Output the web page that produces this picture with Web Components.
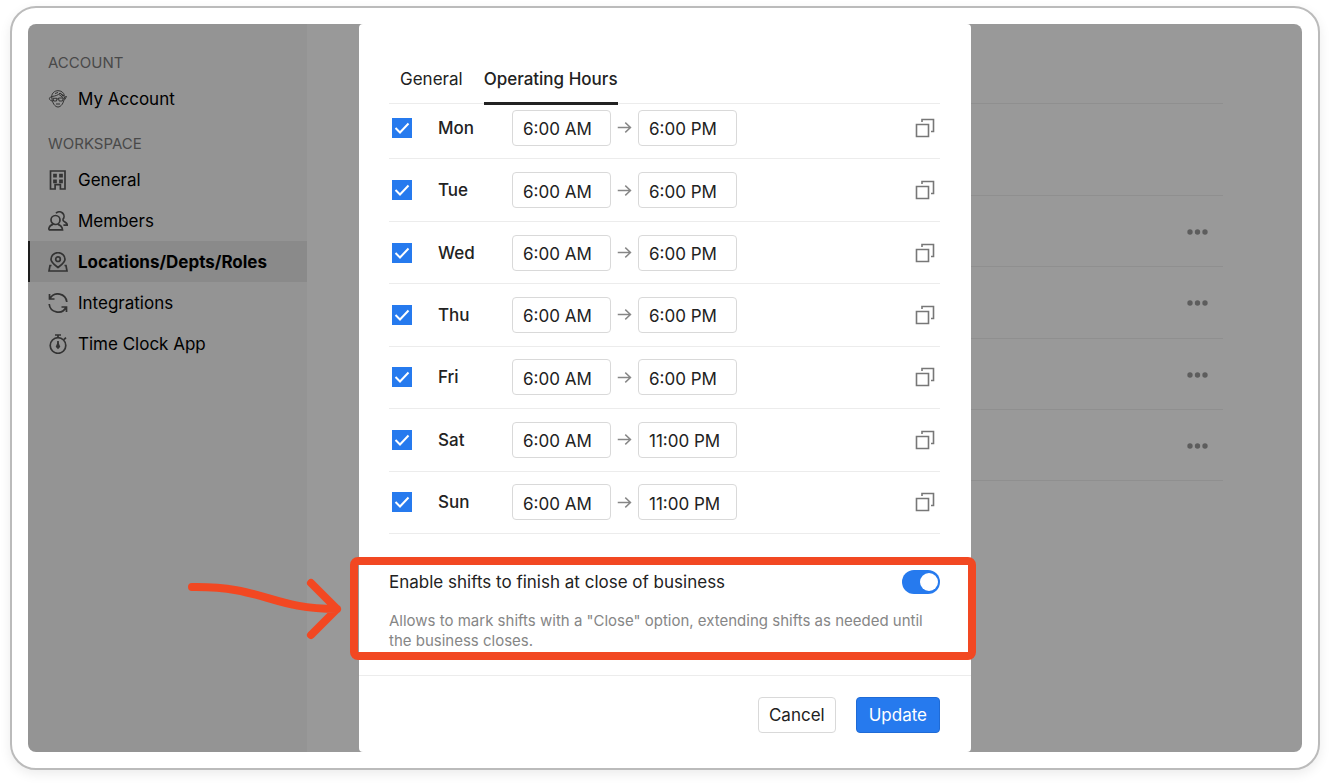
<!DOCTYPE html>
<html lang="en">
  <head>
    <meta charset="UTF-8" />
    <meta name="viewport" content="width=device-width, initial-scale=1" />
    <title>Operating Hours</title>
    <style>
      :root {
        --blue: #267aee;
        --red: #f24822;
        --line: #ececec;
        --control: #d9d9d9;
        --text: #222;
        --muted: #868686;
      }
      body {
        margin: 0;
        padding: 6px 10px 14px;
        background: #fff;
        color: var(--text);
        font: 17px/24px Inter, "Liberation Sans", sans-serif;
      }
    </style>
  </head>
  <body>
    <app-frame>
      <settings-page slot="page">
        <nav-group slot="nav" heading="Account">
          <nav-item icon="avatar">My Account</nav-item>
        </nav-group>
        <nav-group slot="nav" heading="Workspace">
          <nav-item icon="building">General</nav-item>
          <nav-item icon="members">Members</nav-item>
          <nav-item icon="location" active>Locations/Depts/Roles</nav-item>
          <nav-item icon="sync">Integrations</nav-item>
          <nav-item icon="timer">Time Clock App</nav-item>
        </nav-group>
      </settings-page>
      <modal-dialog slot="modal">
        <tab-bar slot="tabs"></tab-bar>
        <hours-list></hours-list>
        <call-out>
          <toggle-setting>
            Enable shifts to finish at close of business
            <span slot="hint">Allows to mark shifts with a "Close" option, extending shifts as needed until the business closes.</span>
          </toggle-setting>
        </call-out>
        <action-button slot="footer">Cancel</action-button>
        <action-button slot="footer" primary>Update</action-button>
      </modal-dialog>
    </app-frame>

    <script>
      const icons = {
        avatar: `<circle cx="10" cy="10" r="9.5" fill="#fff" opacity=".14" stroke="none"/>
          <g stroke-width="1"><path d="M3.500 8C4 3.500 7 1.700 10 1.700s5.700 1.500 6.500 5M3.800 8C4 14 7 18 10 18s6-4 6.500-10M3.500 8.300C.5 7.500.8 11.500 4 12M16.500 8l2-.5-1.800 3.200"/>
          <path d="M3.500 7.500c4-.3 7-1.500 8.500-3.500l4.500 3.300M5 9.300h4l-.5 2.700H5.600zM10.500 9h4.800l-.8 3h-3.400zM9 10h1.500M11 5.500l4 3M12.500 4.800l3 2.500M8 15h4M7 4.500l3-1"/></g>`,
        building: `<path d="M2.500 1h14.500v18h-4.600v-4.300H7.100V19H2.500z"/><path d="M6 4.700h2v2H6zM12 4.700h2v2h-2zM6 10.300h2v2H6zM12 10.300h2v2h-2z"/>`,
        members: `<circle cx="7.500" cy="9" r="4.500"/><path d="M.7 18.800h13.800c-.3-2.700-2-4.600-4.500-5.400M5 13.400c-2.600.8-4.200 2.700-4.300 5.400M8 2.300a4.600 4.600 0 1 1 6.800 6.200M14.800 8.500c.2 2.600 4.200 2.500 4.600 5.600h-4"/>`,
        location: `<path d="M10 15.500C7 13 3 10.500 3 7.200a7 6.500 0 0 1 14 0c0 3.300-4 5.800-7 8.300z"/><circle cx="10" cy="7.200" r="2.300"/><path d="M3.500 13.500H2L1 19h18l-1-5.500h-1.500"/>`,
        sync: `<path d="M2 5.500A9 9 0 0 1 18.800 9M1.500 1v5h5M18 14.500A9 9 0 0 1 1.200 11M18.500 19v-5h-5"/>`,
        timer: `<circle cx="10" cy="11.500" r="7.800"/><path d="M10 3.500V1M7 1h6M16 5.500L18 3.700M10 7v7"/><path d="M10 9.500l1.300 3L10 14l-1.300-1.500z" fill="currentColor"/>`,
        arrow: `<path d="M1 10h17M11 3.500l7 6.500-7 6.500"/>`,
        copy: `<path d="M1.500 6.500h12v12h-12zM7 4V1.500h11.500v12H16"/>`,
      };

      const svg = (name, size = 20, stroke = 1.7) =>
        `<svg width="${size}" height="${size}" viewBox="0 0 20 20" fill="none" stroke="currentColor" stroke-width="${stroke}" aria-hidden="true">${icons[name]}</svg>`;

      // Registers an element whose shadow root is filled from render(host)
      const define = (name, render) => {
        customElements.define(
          name,
          class extends HTMLElement {
            constructor() {
              super();
              this.attachShadow({ mode: "open" });
            }
            connectedCallback() {
              const template = document.createElement("template");
              template.innerHTML = `<style>*{box-sizing:border-box}:host{display:block}</style>${render(this)}`;
              this.shadowRoot.replaceChildren(template.content.cloneNode(true));
            }
          }
        );
      };

      define("app-frame", () => `
        <style>
          :host {
            padding: 16px;
            border: 2px solid #bbb;
            border-radius: 26px;
            background: #fff;
            box-shadow: 0 4px 12px rgba(0, 0, 0, 0.08);
          }
          /* page and modal share the one cell, modal on top */
          .screen { display: grid; border-radius: 8px; }
          .screen > * { grid-area: 1 / 1; min-width: 0; }
          .page { display: grid; overflow: hidden; border-radius: 8px; }
          .backdrop {
            display: flex;
            justify-content: center;
            background: rgba(0, 0, 0, 0.4);
            border-radius: 8px;
            z-index: 1;
          }
        </style>
        <div class="screen">
          <div class="page"><slot name="page"></slot></div>
          <div class="backdrop"><slot name="modal"></slot></div>
        </div>`);

      define("settings-page", () => `
        <style>
          :host { display: flex; color: #000; }
          nav {
            flex: 0 0 279px;
            display: flex;
            flex-direction: column;
            gap: 8px;
            padding-top: 22px;
            background: #f7f7f7;
          }
          main { flex: 1; padding: 0 79px; }
          header { height: 80px; border-bottom: 1px solid #eee; }
          .columns { height: 92px; border-bottom: 1px solid #eee; }
          ul {
            display: grid;
            grid-template-rows: repeat(4, 1fr);
            height: 285px;
            margin: 0;
            padding: 0;
            list-style: none;
          }
          li {
            display: flex;
            align-items: center;
            justify-content: flex-end;
            padding: 2px 15px 0 0;
            border-bottom: 1px solid #eee;
          }
          button { display: flex; padding: 0; border: 0; background: none; color: #9c9c9c; }
        </style>
        <nav><slot name="nav"></slot></nav>
        <main>
          <header></header>
          <div class="columns"></div>
          <ul>${`<li><button type="button" aria-label="More"><svg width="21" height="6" fill="currentColor"><circle cx="3" cy="3" r="2.700"/><circle cx="10.500" cy="3" r="2.700"/><circle cx="18" cy="3" r="2.700"/></svg></button></li>`.repeat(4)}</ul>
        </main>`);

      define("nav-group", (host) => `
        <style>
          h2 {
            margin: 0;
            padding: 2px 0 0 20px;
            color: #7b7b7b;
            font-size: 15px;
            font-weight: 400;
            line-height: 30px;
            text-transform: uppercase;
          }
        </style>
        <h2>${host.getAttribute("heading")}</h2>
        <slot></slot>`);

      define("nav-item", (host) => `
        <style>
          a {
            display: flex;
            align-items: center;
            gap: 10px;
            height: 41px;
            padding-left: 20px;
            color: inherit;
            text-decoration: none;
          }
          svg { color: #555; }
          :host([active]) a {
            padding-left: 18px;
            border-left: 2px solid #333;
            background: #e6e6e6;
            font-weight: 700;
          }
        </style>
        <a href="#">${svg(host.getAttribute("icon"))}<span><slot></slot></span></a>`);

      define("modal-dialog", () => `
        <style>
          :host {
            display: flex;
            flex-direction: column;
            width: 612px;
            border-radius: 4px;
            background: #fff;
          }
          .body { padding: 0 31px 24px 30px; }
          footer {
            display: flex;
            justify-content: flex-end;
            gap: 20px;
            padding: 21px 31px 19px;
            border-top: 1px solid var(--line);
          }
        </style>
        <slot name="tabs"></slot>
        <div class="body"><slot></slot></div>
        <footer><slot name="footer"></slot></footer>`);

      define("tab-bar", () => `
        <style>
          :host {
            display: flex;
            gap: 21px;
            margin: 28px 31px 1px 30px;
            padding-left: 11px;
            border-bottom: 1px solid var(--line);
            z-index: 1;
          }
          button {
            height: 53px;
            margin-bottom: -2px;
            padding: 3px 0 0;
            border: 0;
            border-bottom: 3px solid transparent;
            background: none;
            color: inherit;
            font: inherit;
          }
          [aria-selected="true"] { border-color: var(--text); font-weight: 500; }
        </style>
        <button type="button" role="tab" aria-selected="false">General</button>
        <button type="button" role="tab" aria-selected="true">Operating Hours</button>`);

      // The list sits scrolled a little way under the tabs
      define("hours-list", () => `
        <style>
          :host {
            display: grid;
            grid-template-rows: repeat(7, 1fr);
            height: 437px;
            margin-top: -8px;
          }
        </style>
        ${["Mon", "Tue", "Wed", "Thu", "Fri", "Sat", "Sun"]
          .map((day, i) => `<hours-row day="${day}" open="6:00 AM" close="${i < 5 ? "6:00 PM" : "11:00 PM"}"></hours-row>`)
          .join("")}`);

      define("hours-row", (host) => {
        const day = host.getAttribute("day");
        return `
        <style>
          :host {
            display: flex;
            align-items: center;
            padding: 0 5px 0 3px;
            border-bottom: 1px solid var(--line);
          }
          label { display: flex; align-items: center; gap: 26px; width: 120px; font-weight: 500; }
          [type="checkbox"] {
            appearance: none;
            width: 20px;
            height: 20px;
            margin: 0;
            background: var(--blue);
          }
          .tick { display: grid; }
          .tick > * { grid-area: 1 / 1; }
          .tick svg { color: #fff; pointer-events: none; }
          [type="text"] {
            width: 99px;
            height: 36px;
            padding: 3px 10px 0;
            border: 1px solid var(--control);
            border-radius: 4px;
            background: #fff;
            color: inherit;
            font: inherit;
          }
          .arrow { display: flex; justify-content: center; width: 27px; color: var(--muted); }
          button { display: flex; margin-left: auto; padding: 0; border: 0; background: none; color: #777; }
        </style>
        <label>
          <span class="tick">
            <input type="checkbox" checked />
            <svg width="20" height="20" fill="none" stroke="currentColor" stroke-width="2"><path d="M3.500 10l4.500 4.500 8.500-9"/></svg>
          </span>
          ${day}
        </label>
        <input type="text" value="${host.getAttribute("open")}" aria-label="${day} opens" />
        <span class="arrow">${svg("arrow", 15, 1.9)}</span>
        <input type="text" value="${host.getAttribute("close")}" aria-label="${day} closes" />
        <button type="button" aria-label="Copy ${day}">${svg("copy", 20, 1.6)}</button>`;
      });

      // Hand-drawn style marker: red outline with an arrow pointing at it
      define("call-out", () => `
        <style>
          :host { position: relative; padding-top: 36px; color: var(--text); }
          .outline {
            position: absolute;
            inset: 23px -36px -9px -39px;
            border: 8px solid var(--red);
            border-radius: 8px;
            pointer-events: none;
          }
          svg { position: absolute; right: 100%; top: 44px; margin-right: 46px; pointer-events: none; }
        </style>
        <slot></slot>
        <div class="outline"></div>
        <svg width="156" height="62" fill="none" stroke="var(--red)" stroke-width="8" stroke-linecap="round" stroke-linejoin="round" aria-hidden="true">
          <path d="M5 9C76 8 84 31 150 31M124 5l26 26-26 26"/>
        </svg>`);

      define("toggle-setting", () => `
        <style>
          label { display: flex; align-items: center; justify-content: space-between; }
          input {
            appearance: none;
            display: flex;
            justify-content: flex-end;
            width: 38px;
            height: 24px;
            margin: 0;
            padding: 3px 2px;
            border-radius: 12px;
            background: var(--blue);
          }
          input::before { content: ""; width: 18px; height: 18px; border-radius: 50%; background: #fff; }
          p { margin: 17px 0 0; color: var(--muted); font-size: 15px; line-height: 20px; }
        </style>
        <label><span><slot></slot></span><input type="checkbox" role="switch" checked /></label>
        <p><slot name="hint"></slot></p>`);

      define("action-button", () => `
        <style>
          button {
            height: 36px;
            padding: 0 10px;
            border: 1px solid var(--control);
            border-radius: 4px;
            background: #fff;
            color: inherit;
            font: inherit;
          }
          :host([primary]) button { padding: 0 12px; border-color: #1f6bd6; background: var(--blue); color: #fff; }
        </style>
        <button type="button"><slot></slot></button>`);
    </script>
  </body>
</html>
